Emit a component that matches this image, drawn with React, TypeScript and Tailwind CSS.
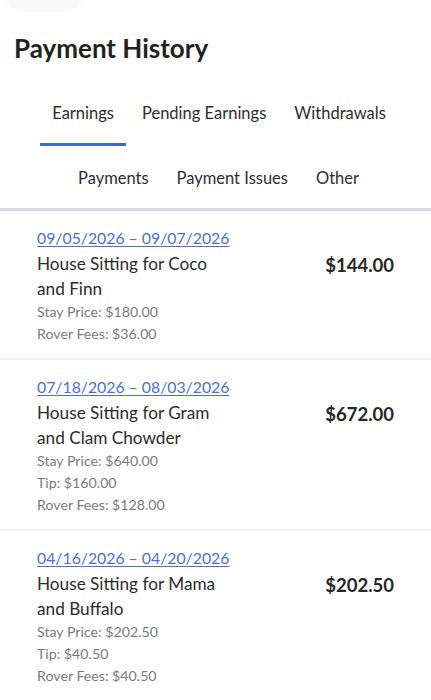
type Payout = {
  range: string;
  title: string;
  amount: string;
  lines: string[];
};

const payouts: Payout[] = [
  {
    range: "09/05/2026 – 09/07/2026",
    title: "House Sitting for Coco and Finn",
    amount: "$144.00",
    lines: ["Stay Price: $180.00", "Rover Fees: $36.00"],
  },
  {
    range: "07/18/2026 – 08/03/2026",
    title: "House Sitting for Gram and Clam Chowder",
    amount: "$672.00",
    lines: ["Stay Price: $640.00", "Tip: $160.00", "Rover Fees: $128.00"],
  },
  {
    range: "04/16/2026 – 04/20/2026",
    title: "House Sitting for Mama and Buffalo",
    amount: "$202.50",
    lines: ["Stay Price: $202.50", "Tip: $40.50", "Rover Fees: $40.50"],
  },
];

const topTabs = ["Earnings", "Pending Earnings", "Withdrawals"];
const bottomTabs = ["Payments", "Payment Issues", "Other"];

function PayoutRow({ item }: { item: Payout }) {
  return (
    <div className="flex justify-between px-[37px] pt-[16px] pb-[13px] border-b-2 border-[#f1f1f1]">
      <div className="w-[186px]">
        <a href="#" className="block whitespace-nowrap text-[15.8px] leading-[22px] text-[#4a70d8] underline underline-offset-2">
          {item.range}
        </a>
        <div className="mt-[3px] text-[17.2px] leading-[24.5px] text-[#2b2b2b]">{item.title}</div>
        {item.lines.map((l) => (
          <div key={l} className="whitespace-nowrap text-[14.2px] leading-[22px] text-[#7b7b7b]">
            {l}
          </div>
        ))}
      </div>
      <div className="pt-[26px] text-[18.5px] font-bold leading-[24px] text-[#262626]">{item.amount}</div>
    </div>
  );
}

export default function App() {
  return (
    <div
      className="relative w-[431px] h-[700px] overflow-hidden bg-white"
      style={{ fontFamily: 'Lato, "Noto Sans", sans-serif' }}
    >
      <div className="absolute left-[4px] -top-[30px] w-[80px] h-[42px] rounded-full bg-[#fafafa]" />

      <h1 className="pl-[14px] pt-[32px] text-[26px] font-bold leading-[32px] text-[#222]">Payment History</h1>

      <div className="mt-[37px] flex justify-center gap-1 pl-[7px]">
        {topTabs.map((t, i) => (
          <button
            key={t}
            className={`px-3 pb-[18px] text-[16.5px] leading-[24px] text-[#2e2e2e] border-b-[3px] ${
              i === 0 ? "border-[#3f69d6]" : "border-transparent"
            }`}
          >
            {t}
          </button>
        ))}
      </div>

      <div className="mt-[20px] flex justify-center gap-1 pl-[6px]">
        {bottomTabs.map((t) => (
          <button key={t} className="px-3 text-[16.5px] leading-[24px] text-[#2e2e2e]">
            {t}
          </button>
        ))}
      </div>

      <div className="mt-[18px] h-[3px] bg-[#d4dbe2]" />

      <div>
        {payouts.map((p) => (
          <PayoutRow key={p.range} item={p} />
        ))}
      </div>
    </div>
  );
}
